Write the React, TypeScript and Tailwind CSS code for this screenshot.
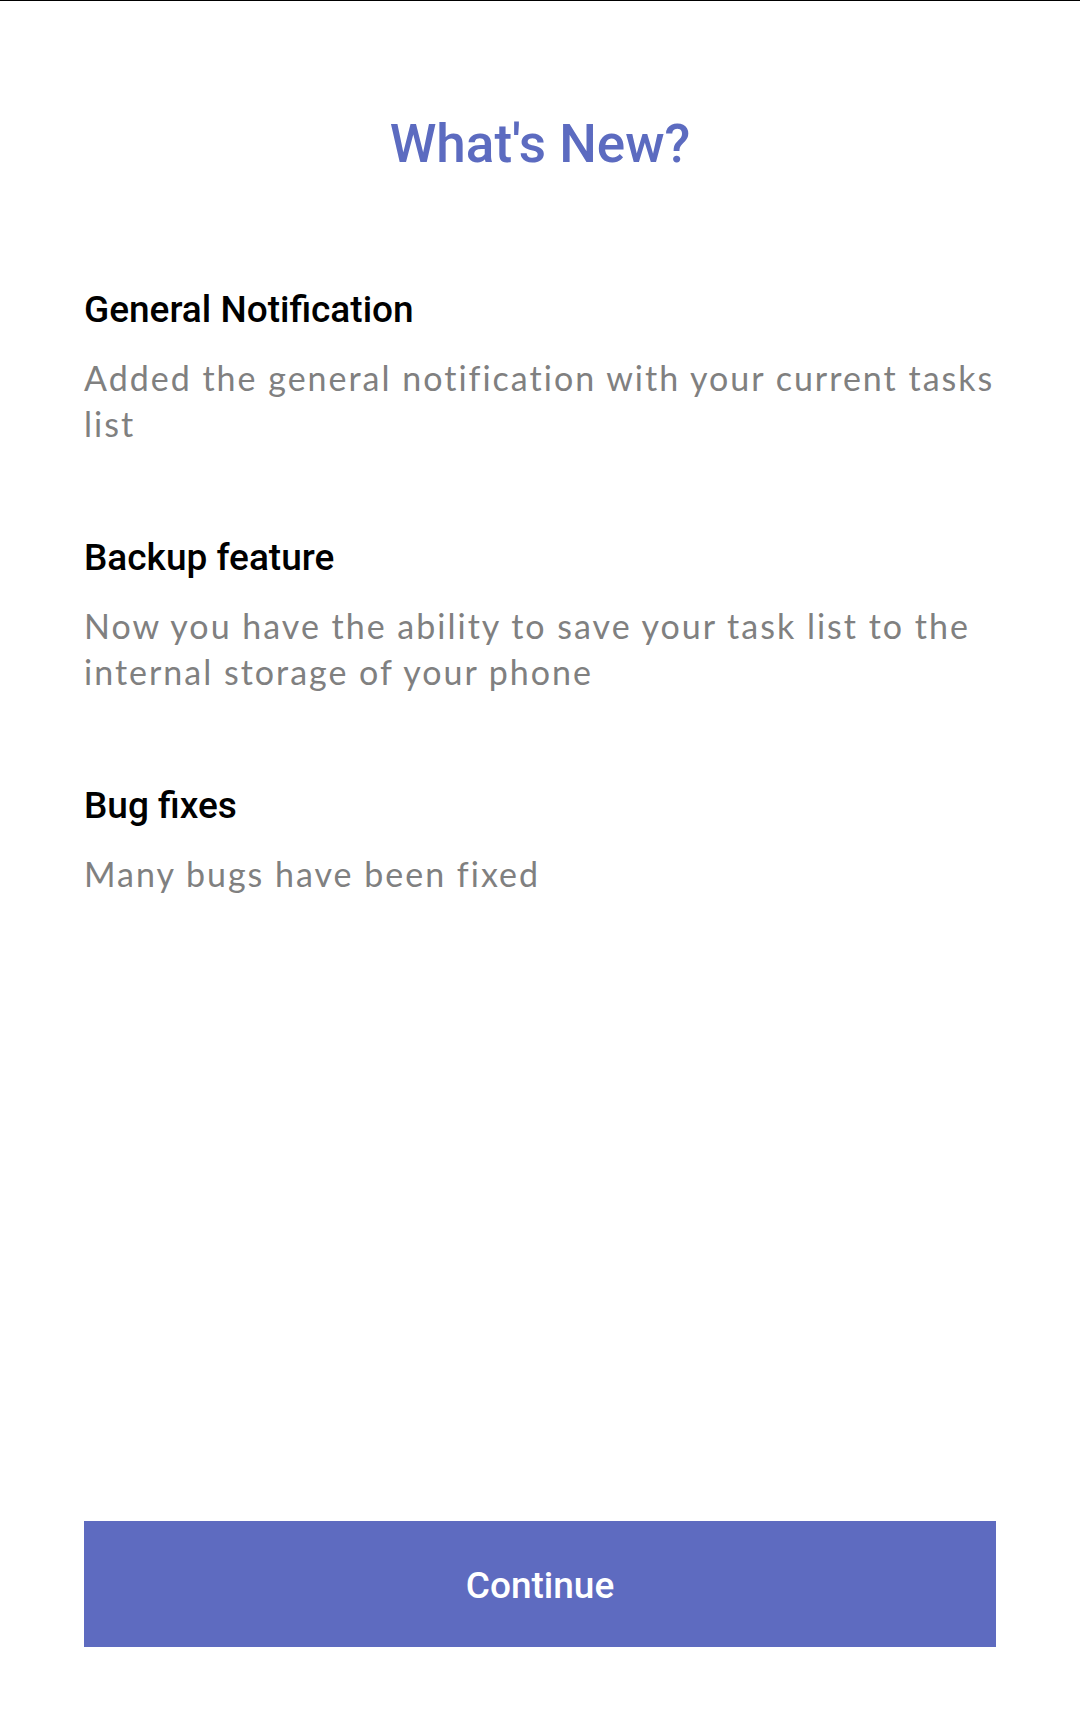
export default function App() {
  const items = [
    {
      title: "General Notification",
      text: "Added the general notification with your current tasks list",
    },
    {
      title: "Backup feature",
      text: "Now you have the ability to save your task list to the internal storage of your phone",
    },
    {
      title: "Bug fixes",
      text: "Many bugs have been fixed",
    },
  ];

  return (
    <div className="min-h-screen flex flex-col bg-white">
      <div className="h-px bg-black" />

      <h1 className="mt-[111px] text-center text-[53px] leading-[64px] font-medium text-[#5C6BC0] font-['Roboto',sans-serif]">
        What's New?
      </h1>

      <div className="mt-[114px] px-[84px] flex flex-col gap-[91px]">
        {items.map((item) => (
          <div key={item.title}>
            <div className="text-[37px] leading-[40px] font-medium text-black font-['Roboto',sans-serif]">
              {item.title}
            </div>
            <p className="mt-[25px] text-[34px] leading-[46px] tracking-[2px] text-[#808080] font-['Lato',sans-serif]">
              {item.text}
            </p>
          </div>
        ))}
      </div>

      <div className="mt-auto px-[84px] pb-[84px]">
        <button className="w-full h-[126px] pt-[4px] bg-[#5E6BC0] text-white text-[37px] font-medium font-['Roboto',sans-serif]">
          Continue
        </button>
      </div>
    </div>
  );
}
